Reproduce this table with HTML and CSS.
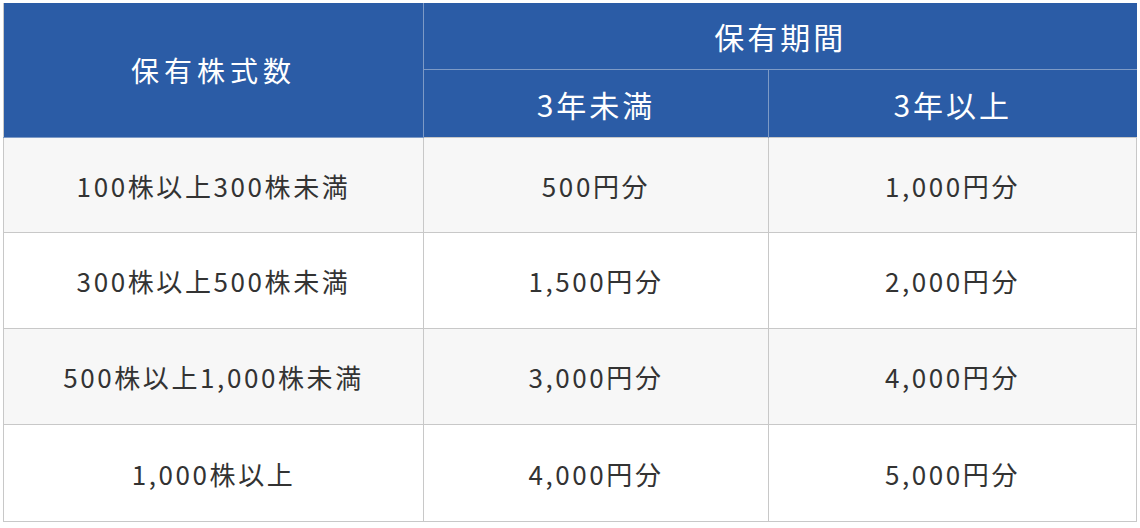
FILE: index.html
```html
<!DOCTYPE html>
<html lang="ja">
<head>
<meta charset="utf-8">
<title>株主優待</title>
<link rel="stylesheet" href="styles.css">
</head>
<body>
<table class="benefit">
  <colgroup>
    <col class="c1">
    <col class="c2">
    <col class="c3">
  </colgroup>
  <thead>
    <tr class="h1">
      <th rowspan="2" class="first">保有株式数</th>
      <th colspan="2">保有期間</th>
    </tr>
    <tr class="h2">
      <th>3年未満</th>
      <th>3年以上</th>
    </tr>
  </thead>
  <tbody>
    <tr class="odd r1">
      <td>100株以上300株未満</td>
      <td>500円分</td>
      <td>1,000円分</td>
    </tr>
    <tr>
      <td>300株以上500株未満</td>
      <td>1,500円分</td>
      <td>2,000円分</td>
    </tr>
    <tr class="odd">
      <td>500株以上1,000株未満</td>
      <td>3,000円分</td>
      <td>4,000円分</td>
    </tr>
    <tr class="last">
      <td>1,000株以上</td>
      <td>4,000円分</td>
      <td>5,000円分</td>
    </tr>
  </tbody>
</table>
</body>
</html>
```

FILE: styles.css
```css
html, body {
  margin: 0;
  padding: 0;
  background: #ffffff;
}

body {
  padding: 3px 0 0 3px;
  font-family: "Noto Sans CJK JP", "Noto Sans", sans-serif;
  color: #333333;
}

.benefit {
  width: 1133px;
  border-collapse: collapse;
  table-layout: fixed;
}

.c1 { width: 420px; }
.c2 { width: 345px; }
.c3 { width: 368px; }

.benefit th {
  background: #2b5ca6;
  color: #ffffff;
  font-weight: 400;
  font-size: 30px;
  letter-spacing: 0.1em;
  text-align: center;
  vertical-align: middle;
  padding: 0;
  border: 1px solid #7d9ac6;
  border-top: 0;
}

.benefit th.first {
  border-left: 1px solid #c8c8c8;
  font-size: 28px;
  letter-spacing: 0.18em;
}

.h1 th { height: 66px; }
.h2 th { height: 67px; border-bottom: 0; }
.h2 th:last-child { border-right: 0; }
.h1 th:last-child { border-right: 0; }

.benefit td {
  height: 95px;
  padding: 0;
  font-size: 26px;
  letter-spacing: 0.1em;
  text-align: center;
  vertical-align: middle;
  border: 1px solid #c8c8c8;
  background: #ffffff;
}

.benefit tr.r1 td { height: 94px; }
.benefit tr.last td { height: 96px; }

.benefit tr.odd td {
  background: #f7f7f7;
}
```
